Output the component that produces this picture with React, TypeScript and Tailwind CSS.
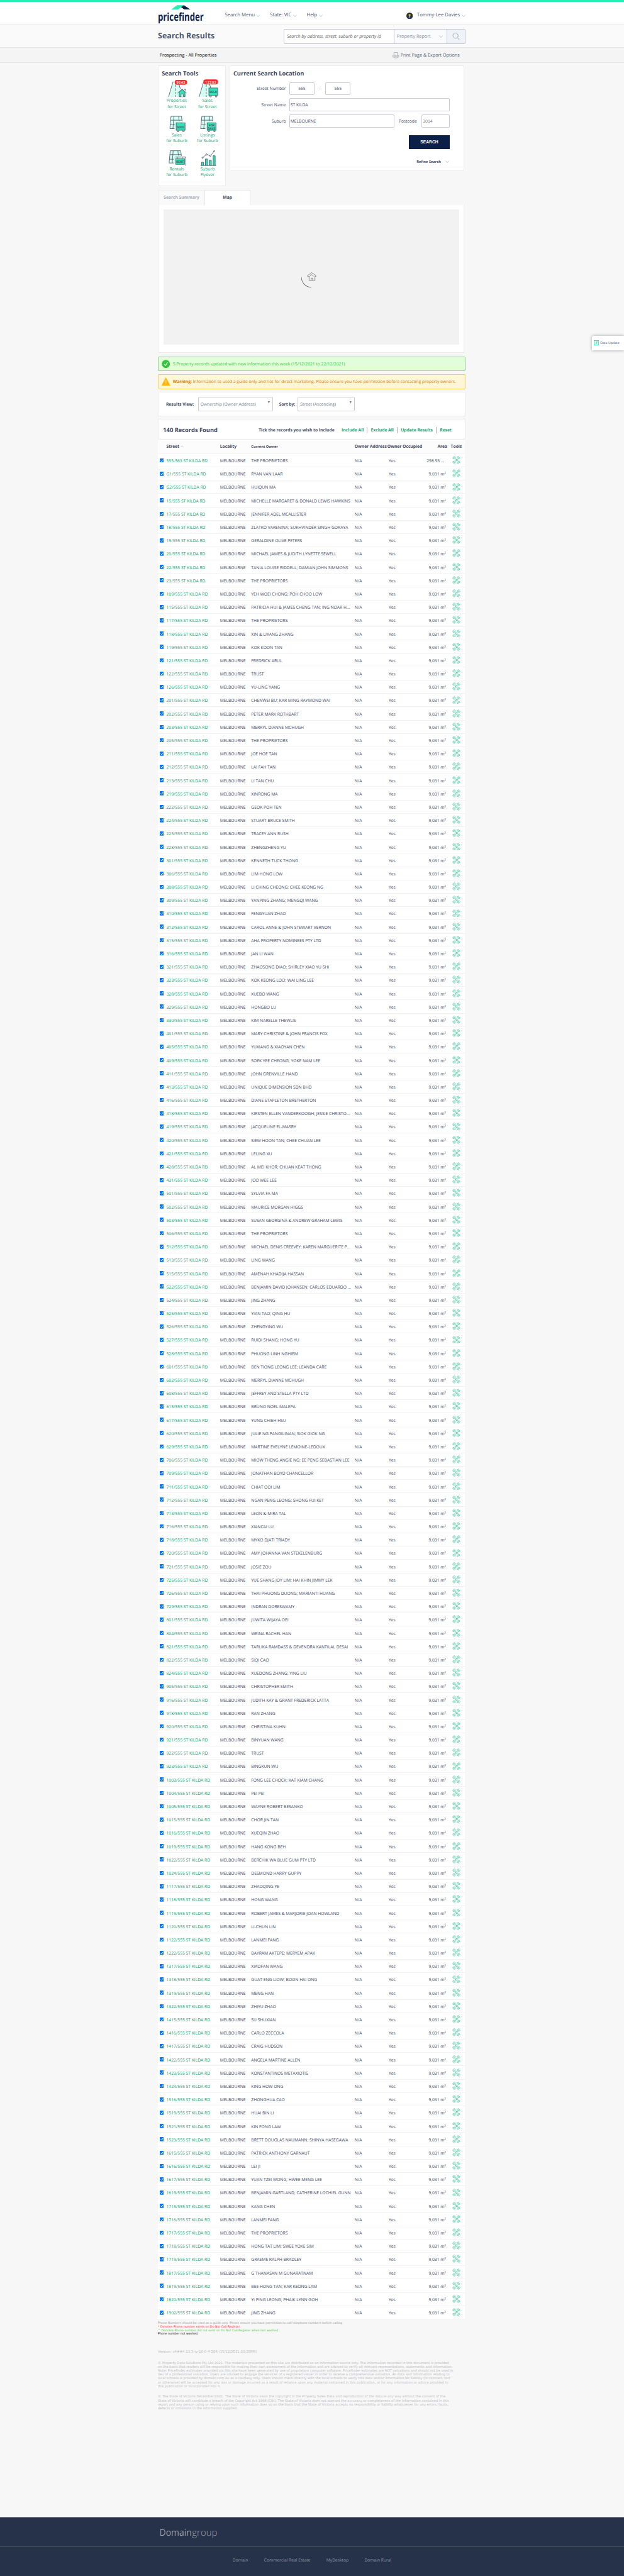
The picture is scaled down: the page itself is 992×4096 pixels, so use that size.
import React from 'react';

const RECORDS = `555-563|THE PROPRIETORS
G1/555|RYAN VAN LAAR
G2/555|HUIQUN MA
15/555|MICHELLE MARGARET & DONALD LEWIS HAWKINS
17/555|JENNIFER ADEL MCALLISTER
18/555|ZLATKO VARENINA; SUKHVINDER SINGH GORAYA
19/555|GERALDINE OLIVE PETERS
20/555|MICHAEL JAMES & JUDITH LYNETTE SEWELL
22/555|TANIA LOUISE RIDDELL; DAMIAN JOHN SIMMONS
23/555|THE PROPRIETORS
109/555|YEH WOEI CHONG; POH CHOO LOW
115/555|PATRICIA HUI & JAMES CHENG TAN; ING NOAR H...
117/555|THE PROPRIETORS
118/555|XIN & LIYANG ZHANG
119/555|KOK KOON TAN
121/555|FREDRICK ARUL
122/555|TRUST
126/555|YU-LING YANG
201/555|CHENWEI BU; KAR MING RAYMOND WAI
202/555|PETER MARK ROTHBART
203/555|MERRYL DIANNE MCHUGH
205/555|THE PROPRIETORS
211/555|JOE HOE TAN
212/555|LAI FAH TAN
213/555|LI TAN CHU
219/555|XINRONG MA
222/555|GEOK POH TEN
224/555|STUART BRUCE SMITH
225/555|TRACEY ANN RUSH
228/555|ZHENGZHENG YU
301/555|KENNETH TUCK THONG
306/555|LIM HONG LOW
308/555|LI CHING CHEONG; CHEE KEONG NG
309/555|YANPING ZHANG; MENGQI WANG
310/555|FENGYUAN ZHAO
312/555|CAROL ANNE & JOHN STEWART VERNON
315/555|AHA PROPERTY NOMINEES PTY LTD
316/555|JAN LI WAN
321/555|ZHAOSONG DIAO; SHIRLEY XIAO YU SHI
323/555|KOK KEONG LOO; WAI LING LEE
328/555|XUEBO WANG
329/555|HONGBO LU
330/555|KIM NARELLE THEWLIS
401/555|MARY CHRISTINE & JOHN FRANCIS FOX
405/555|YUXIANG & XIAOYAN CHEN
409/555|SOEK YEE CHEONG; YOKE NAM LEE
411/555|JOHN GRENVILLE HAND
413/555|UNIQUE DIMENSION SDN BHD
416/555|DIANE STAPLETON BRETHERTON
418/555|KIRSTEN ELLEN VANDERKOOGH; JESSIE CHRISTO...
419/555|JACQUELINE EL-MASRY
420/555|SIEW HOON TAN; CHEE CHUAN LEE
421/555|LELING XU
428/555|AL MEI KHOR; CHUAN KEAT THONG
431/555|JOO WEE LEE
501/555|SYLVIA FA MA
502/555|MAURICE MORGAN HIGGS
503/555|SUSAN GEORGINA & ANDREW GRAHAM LEWIS
506/555|THE PROPRIETORS
512/555|MICHAEL DENIS CREEVEY; KAREN MARGUERITE P...
513/555|LING WANG
515/555|AMENAH KHADIJA HASSAN
522/555|BENJAMIN DAVID JOHANSEN; CARLOS EDUARDO ...
524/555|JING ZHANG
525/555|YIAN TAO; QING HU
526/555|ZHENGYING WU
527/555|RUIDI SHANG; HONG YU
528/555|PHUONG LINH NGHIEM
601/555|BEN TIONG LEONG LEE; LEANDA CARE
602/555|MERRYL DIANNE MCHUGH
608/555|JEFFREY AND STELLA PTY LTD
615/555|BRUNO NOEL MALEPA
617/555|YUNG CHIEH HSU
620/555|JULIE NG PANGILINAN; SIOK GIOK NG
629/555|MARTINE EVELYNE LEMOINE-LEDOUX
706/555|MIOW THENG ANGIE NG; EE PENG SEBASTIAN LEE
709/555|JONATHAN BOYD CHANCELLOR
711/555|CHIAT OOI LIM
712/555|NGAN PENG LEONG; SHONG FUI KET
713/555|LEON & MIRA TAL
716/555|XIANCAI LU
718/555|MYKO DJATI TRIADY
720/555|AMY JOHANNA VAN STEKELENBURG
721/555|JOSIE ZOU
725/555|YUE SHANG JOY LIM; HAI KHIN JIMMY LEK
726/555|THAI PHUONG DUONG; MARIANTI HUANG
729/555|INDRAN DORESWAMY
801/555|JUWITA WIJAYA OEI
804/555|WEINA RACHEL HAN
821/555|TARLIKA RAMDASS & DEVENDRA KANTILAL DESAI
822/555|SIQI CAO
824/555|XUEDONG ZHANG; YING LIU
905/555|CHRISTOPHER SMITH
916/555|JUDITH KAY & GRANT FREDERICK LATTA
918/555|RAN ZHANG
920/555|CHRISTINA KUHN
921/555|BINYUAN WANG
922/555|TRUST
923/555|BINGKUN WU
1003/555|FONG LEE CHOCK; KAT KIAM CHANG
1004/555|PEI PEI
1005/555|WAYNE ROBERT BESANKO
1015/555|CHOR JIN TAN
1016/555|XUEQIN ZHAO
1019/555|HANG KONG BEH
1022/555|BERCHIK WA BLUE GUM PTY LTD
1024/555|DESMOND HARRY GUPPY
1117/555|ZHAOQING YE
1118/555|HONG WANG
1119/555|ROBERT JAMES & MARJORIE JOAN HOWLAND
1120/555|LI-CHUN LIN
1122/555|LANMEI FANG
1222/555|BAYRAM AKTEPE; MERYEM APAK
1317/555|XIAOFAN WANG
1318/555|GUAT ENG LIOW; BOON HAI ONG
1319/555|MENG HAN
1322/555|ZHIYU ZHAO
1415/555|SU SHUXIAN
1416/555|CARLO ZECCOLA
1417/555|CRAIG HUDSON
1422/555|ANGELA MARTINE ALLEN
1423/555|KONSTANTINOS METAXIOTIS
1424/555|KING HOW ONG
1516/555|ZHONGHUA CAO
1519/555|HUAI BIN LI
1521/555|KIN FONG LAW
1523/555|BRETT DOUGLAS NAUMANN; SHINYA HASEGAWA
1615/555|PATRICK ANTHONY GARNAUT
1616/555|LEI JI
1617/555|YUAN TZEI WONG; HWEE MENG LEE
1619/555|BENJAMIN GARTLAND; CATHERINE LOCHIEL GUNN
1715/555|KANG CHEN
1716/555|LANMEI FANG
1717/555|THE PROPRIETORS
1718/555|HONG TAT LIM; SWEE YOKE SIM
1719/555|GRAEME RALPH BRADLEY
1817/555|G THANASAN M GUNARATNAM
1819/555|BEE HONG TAN; KAR KEONG LAM
1820/555|YI PING LEONG; PHAIK LYNN GOH
1902/555|JING ZHANG`
  .split('\n')
  .map((line) => line.split('|'));

const DISCLAIMER = [
  '© Property Data Solutions Pty Ltd 2021. The materials presented on this site are distributed as an information source only. The information recorded in this document is provided',
  'on the basis that readers will be responsible for making their own assessment of the information and are advised to verify all relevant representations, statements and information.',
  'Note: Pricefinder estimates provided via this site have been generated by use of proprietary computer software. Pricefinder estimates are NOT valuations and should not be used in',
  'lieu of a professional valuation. Users are advised to engage the services of a registered valuer in order to receive a comprehensive valuation. All data and information relating to',
  'local schools is provided by domain.com.au as a courtesy only. Users should check directly with the local schools to verify this data and/or information.No liability (in contract, tort',
  'or otherwise) will be accepted for any loss or damage incurred as a result of reliance upon any material contained in this publication, or for any information or advice provided in',
  'this publication or incorporated into it.',
];

const VICTORIA = [
  '© The State of Victoria December/2021. The State of Victoria owns the copyright in the Property Sales Data and reproduction of the data in any way without the consent of the',
  'State of Victoria will constitute a breach of the Copyright Act 1968 (Cth). The State of Victoria does not warrant the accuracy or completeness of the information contained in this',
  'report and any person using or relying upon such information does so on the basis that the State of Victoria accepts no responsibility or liability whatsoever for any errors, faults,',
  'defects or omissions in the information supplied.',
];

function Chevron({ className = '' }: { className?: string }) {
  return (
    <svg viewBox="0 0 12 8" className={`h-8 w-12 shrink-0 ${className}`} fill="none" stroke="#a9b0bd" strokeWidth="1.4">
      <path d="M1 1l5 6 5-6" />
    </svg>
  );
}

function Wrench() {
  return (
    <>
      <path d="M12 6C20 1 29 7 26 17C26 20 27 21 29 23L49 43C51 45 52 46 55 46C65 43 71 52 66 60" />
      <path d="M6 12C1 20 7 29 17 26C20 26 21 27 23 29L43 49C45 51 46 52 46 55C43 65 52 71 60 66" />
      <path d="M12 6L19 13V19H13L6 12M60 66L53 59V53H59L66 60" />
    </>
  );
}

function Wrenches() {
  return (
    <svg viewBox="0 0 72 72" className="h-25 w-25" fill="none" stroke="#52d0a8" strokeWidth="4.5" strokeLinejoin="round">
      <Wrench />
      <g transform="translate(72 0) scale(-1 1)">
        <Wrench />
      </g>
    </svg>
  );
}

function Check() {
  return (
    <svg viewBox="0 0 13 13" className="h-13 w-13">
      <rect width="13" height="13" rx="2" fill="#0075ff" />
      <path d="M2.8 6.8l2.6 2.7 4.8-6" fill="none" stroke="#fff" strokeWidth="1.9" />
    </svg>
  );
}

const INK = '#4d576e';
const MINT = '#d5fff0';
const TEAL = '#2fe3b2';

function Sign({ x, y, children }: { x: number; y: number; children: React.ReactNode }) {
  return (
    <g stroke={INK} strokeWidth="5">
      <path d={`M${x + 10} ${y + 70}v13h12v-13M${x + 62} ${y + 70}v13h12v-13`} fill="#fff" />
      <rect x={x} y={y} width="82" height="69" fill={TEAL} />
      <g stroke="none" fill={INK} fontFamily="Liberation Mono, monospace" fontWeight="700" textAnchor="middle">
        {children}
      </g>
    </g>
  );
}

function MapGrid({ x, y }: { x: number; y: number }) {
  return (
    <g transform={`translate(${x} ${y})`} fill="none" stroke={INK} strokeWidth="5">
      <path d="M13 3h98l8 48-60 66H2z" fill={MINT} stroke="none" />
      <path d="M45 117H2L13 3h97l6 47M40 3L31 117M84 3l4 44M8 39h108M5 82h43" />
    </g>
  );
}

function Road({ x }: { x: number }) {
  return (
    <g transform={`translate(${x} 0)`} fill="none" stroke={INK} strokeWidth="5">
      <path d="M46 54h54l12 60-10 79H3z" fill={MINT} stroke="none" />
      <path d="M44 54L2 194M98 74l13 46M68 80v22M68 115v24M68 150v18M68 178v16" />
    </g>
  );
}

function ToolIcon({ box, children }: { box: string; children: React.ReactNode }) {
  return (
    <svg viewBox={box} className="h-58 w-67">
      {children}
    </svg>
  );
}

function Tool({ label, children }: { label: [string, string]; children: React.ReactNode }) {
  return (
    <a className="flex w-96 flex-col items-center text-center text-[6.72px] leading-18 text-[#12a06c]">
      {children}
      <span>{label[0]}</span>
      <span>{label[1]}</span>
    </a>
  );
}

const badgeText = { fontFamily: 'Open Sans, sans-serif', fontWeight: 600 } as const;

function SearchTools() {
  return (
    <section className="h-371 w-209 rounded-[2px] border border-[#ececec] bg-white pt-12">
      <h2 className="pl-10 text-[9.3px] leading-18 font-bold text-[#3c475f]">Search Tools</h2>
      <div className="mt-9 grid grid-cols-2 gap-y-11 pr-8 pl-8">
        <Tool label={['Properties', 'for Street']}>
          <ToolIcon box="71 25 200 175">
            <Road x={91} />
            <g stroke={INK} strokeWidth="5">
              <path d="M192 150l27-24 27 24v43h-54z" fill={TEAL} />
              <path d="M178 158l41-35 41 35M234 125h19v18" fill="none" />
              <path d="M209 193v-25h20v25" fill="#fff" />
            </g>
            <rect x="150" y="36" width="115" height="46" rx="22" fill="#ff2b2b" />
            <text x="207" y="72" textAnchor="middle" fontSize="33" textLength="82" fill="#fff" {...badgeText}>9243</text>
          </ToolIcon>
        </Tool>
        <Tool label={['Sales', 'for Street']}>
          <ToolIcon box="358 25 200 175">
            <Road x={376} />
            <Sign x={468} y={112}>
              <text x="509" y="161" fontSize="34" textLength="70" lengthAdjust="spacingAndGlyphs">SOLD</text>
            </Sign>
            <rect x="417" y="33" width="136" height="46" rx="22" fill="#ff2b2b" />
            <text x="485" y="69" textAnchor="middle" fontSize="33" textLength="103" fill="#fff" {...badgeText}>12202</text>
          </ToolIcon>
        </Tool>
        <Tool label={['Sales', 'for Suburb']}>
          <ToolIcon box="71 341 200 175">
            <MapGrid x={103} y={367} />
            <Sign x={164} y={430}>
              <text x="205" y="479" fontSize="34" textLength="70" lengthAdjust="spacingAndGlyphs">SOLD</text>
            </Sign>
          </ToolIcon>
        </Tool>
        <Tool label={['Listings', 'for Suburb']}>
          <ToolIcon box="358 341 200 175">
            <MapGrid x={390} y={367} />
            <Sign x={452} y={430}>
              <text x="494" y="463" fontSize="32" textLength="54" lengthAdjust="spacingAndGlyphs">FOR</text>
              <text x="494" y="491" fontSize="32" textLength="70" lengthAdjust="spacingAndGlyphs">SALE</text>
            </Sign>
          </ToolIcon>
        </Tool>
        <Tool label={['Rentals', 'for Suburb']}>
          <ToolIcon box="71 653 200 175">
            <MapGrid x={96} y={683} />
            <g stroke={INK} strokeWidth="5" fill="none">
              <path d="M157 745h96v82M174 745v14M219 745v14" />
              <rect x="159" y="760" width="82" height="52" fill={TEAL} />
            </g>
            <text x="200" y="799" fontSize="34" textLength="70" lengthAdjust="spacingAndGlyphs" textAnchor="middle" fill={INK} fontFamily="Liberation Mono, monospace" fontWeight="700">RENT</text>
          </ToolIcon>
        </Tool>
        <Tool label={['Suburb', 'Flyover']}>
          <ToolIcon box="358 653 200 175">
            <g stroke={INK} strokeWidth="5">
              <path d="M410 750l36-30 36 13 36-42" fill="none" />
              <path d="M400 823v-30h19v30M436 823v-60h19v60M472 823v-49h19v49M508 823v-90h19v90" fill={TEAL} />
              <path d="M391 824h145" fill="none" />
              <circle cx="410" cy="751" r="6" fill={MINT} />
              <circle cx="446" cy="721" r="6" fill={MINT} />
              <circle cx="482" cy="733" r="6" fill={MINT} />
              <circle cx="518" cy="691" r="6" fill={MINT} />
            </g>
          </ToolIcon>
        </Tool>
      </div>
    </section>
  );
}

const field = 'flex h-40 items-center rounded-[2px] border border-[#c9cad9] bg-white text-[6.72px]';

function SearchForm() {
  return (
    <section className="h-325 w-721 rounded-[2px] border border-[#ececec] bg-white pt-12 text-[#3c475f]">
      <h2 className="pl-9 text-[9.3px] leading-18 font-bold">Current Search Location</h2>
      <div className="mt-19 flex h-40 items-center text-[6.72px]">
        <label className="w-171 text-right">Street Number</label>
        <div className={`ml-10 w-78 justify-center pt-1 ${field}`}>555</div>
        <span className="w-33 text-center">-</span>
        <div className={`w-78 justify-center pt-1 ${field}`}>555</div>
      </div>
      <div className="mt-10 flex h-40 items-center text-[6.72px]">
        <label className="w-171 text-right">Street Name</label>
        <div className={`ml-10 w-493 pt-1 pl-2 ${field}`}>ST KILDA</div>
      </div>
      <div className="mt-10 flex h-40 items-center text-[6.72px]">
        <label className="w-171 text-right">Suburb</label>
        <div className={`ml-10 w-323 pt-1 pl-2 ${field}`}>MELBOURNE</div>
        <label className="ml-14 w-70">Postcode</label>
        <div className={`w-86 pt-1 pl-2 text-[#777] ${field}`}>3004</div>
      </div>
      <button className="mt-24 ml-549 block h-41 w-126 bg-[#0b1f47] font-['Liberation_Sans'] text-[6.72px] font-bold text-white">SEARCH</button>
      <div className="mt-31 ml-573 flex h-18 items-center text-[5.68px] font-bold">
        <span>Refine Search</span>
        <Chevron className="ml-14" />
      </div>
    </section>
  );
}

function MapPanel() {
  return (
    <section className="mt-12 w-943">
      <div className="flex h-45 text-[6.72px] font-bold">
        <div className="flex w-143 items-center justify-center rounded-tl-[2px] border-t border-l border-[#eee] bg-[#fafafa] text-[#a3abb8]">Search Summary</div>
        <div className="flex w-142 items-center justify-center border-t border-r border-l border-[#e8e8e8] bg-white text-[#3c475f]">Map</div>
      </div>
      <div className="h-456 border border-t-0 border-[#ececec] bg-white px-15 pt-14">
        <div className="flex h-417 items-center justify-center bg-[#f2f2f2]">
          <svg viewBox="0 0 60 60" className="mt-31 h-60 w-60" fill="none" stroke="#747474" strokeWidth="2">
            <path d="M0 14c0 16 12 32 31 32" />
            <path d="M19 10l13-9 13 9v3l-3-1v13H24V12l-4 2zM26 12l6-5 6 5M30 25v-7h5v7" strokeWidth="1.6" />
          </svg>
        </div>
      </div>
    </section>
  );
}

function Notices() {
  return (
    <>
      <div className="mt-11 flex h-45 w-946 items-center rounded-[2px] border border-[#8ad68e] bg-[#e2fdd9] pl-10 text-[6.72px] text-[#35c43b]">
        <svg viewBox="0 0 26 26" className="mr-8 h-26 w-26">
          <circle cx="13" cy="13" r="12.5" fill="#35c43b" />
          <path d="M8 14l4 4 6-10" fill="none" stroke="#fff" strokeWidth="2" />
        </svg>
        <span className="pt-3">5 Property records updated with new information this week (15/12/2021 to 22/12/2021)</span>
      </div>
      <div className="mt-10 flex h-46 w-946 items-center rounded-[2px] border border-[#f9cf5c] bg-[#fff6d8] pl-10 text-[6.72px] text-[#d07c00]">
        <svg viewBox="0 0 26 26" className="mr-8 h-26 w-26">
          <path d="M13 1L26 25H0z" fill="#ffb400" stroke="#ffb400" strokeLinejoin="round" />
          <path d="M13 8v10M13 20v2" stroke="#fff" strokeWidth="2" />
        </svg>
        <span className="whitespace-nowrap">
          <b>Warning:</b> Information to used a guide only and not for direct marketing. Please ensure you have permission before contacting property owners.
        </span>
      </div>
    </>
  );
}

function Select({ className, value }: { className: string; value: string }) {
  return (
    <div className={`flex h-43 justify-between rounded-[2px] border border-[#cbccdc] bg-white pt-10 pl-6 leading-20 font-normal text-[#727a8a] ${className}`}>
      <span>{value}</span>
      <svg viewBox="0 0 9 9" className="mt-1 mr-7 h-7 w-9">
        <path d="M0 0h9L4.500 9z" fill="#8a8a8a" />
      </svg>
    </div>
  );
}

function Controls() {
  return (
    <section className="mt-8 flex h-75 w-946 items-center rounded-[2px] border border-[#ececec] bg-white pl-23 text-[6.72px] font-bold text-[#3c475f]">
      <span className="w-98 pt-1">Results View:</span>
      <Select className="w-231" value="Ownership (Owner Address)" />
      <span className="ml-19 w-57 pt-1">Sort by:</span>
      <Select className="w-176" value="Street (Ascending)" />
    </section>
  );
}

function Records() {
  const sep = 'mx-10 h-21 w-px bg-[#b0b4bd]';
  return (
    <>
      <section className="mt-9 flex h-63 w-946 items-center rounded-[2px] border border-[#ececec] bg-white pt-5 pl-14 font-bold text-[#3c475f]">
        <h2 className="w-294 text-[9.3px]">140 Records Found</h2>
        <div className="flex items-center text-[6.72px] text-[#0f9d6b]">
          <span className="w-255 text-[#3c475f]">Tick the records you wish to Include</span>
          <a>Include All</a>
          <i className={sep} />
          <a>Exclude All</a>
          <i className={sep} />
          <a>Update Results</a>
          <i className={sep} />
          <a>Reset</a>
        </div>
      </section>
      <div className="mt-2 flex h-42 w-945 items-center border-b border-[#f3f3f3] bg-[#fcfcfc] pl-26 text-[6.72px] font-bold whitespace-nowrap text-[#3c475f]">
        <span className="flex w-165 items-center">
          Street
          <svg viewBox="0 0 12 8" className="ml-4 h-8 w-10" fill="none" stroke="#a9b0bd" strokeWidth="1.4">
            <path d="M1 7l5-6 5 6" />
          </svg>
        </span>
        <span className="w-96">Locality</span>
        <span className="w-318 text-[5.68px]">Current Owner</span>
        <span className="w-101">Owner Address</span>
        <span className="w-154">Owner Occupied</span>
        <span className="w-41">Area</span>
        <span>Tools</span>
      </div>
      {RECORDS.map(([unit, owner], i) => (
        <div
          key={unit}
          className="flex h-[21.1875px] w-945 items-center border-b border-[#f3f3f3] bg-white pt-5 pl-5 text-[6.72px] whitespace-nowrap text-[#3c475f]"
        >
          <span className="-mt-4 w-21">
            <Check />
          </span>
          <a className="w-165 text-[#12a06c]">{unit} ST KILDA RD</a>
          <span className="w-96">MELBOURNE</span>
          <span className="w-318">{owner}</span>
          <span className="w-105">N/A</span>
          <span className="w-100">Yes</span>
          <span className={i === 0 ? 'w-90 pr-19 text-right' : 'w-90 pr-14 text-right'}>{i === 0 ? '298.93 ...' : '9,031 m²'}</span>
          <span className="-mt-6 ml-5">
            <Wrenches />
          </span>
        </div>
      ))}
    </>
  );
}

export default function App() {
  return (
    <div className="relative flex h-[4096px] w-full flex-col overflow-hidden bg-[#f7f7f7] font-['Open_Sans',sans-serif] [--spacing:0.51675px] [text-rendering:geometricPrecision]">
      <div className="h-5 bg-[#22f0b3]" />
      <header className="h-70 border-b border-[#ececec] bg-white">
        <div className="mx-auto flex h-full w-948">
          <svg viewBox="0 0 142 70" className="h-70 w-142 overflow-visible">
            <path d="M41 23L59 10h21L62 23z" fill="#22f0b3" />
            <path d="M71 16l9-6 20 13H81z" fill="#0b1f47" />
            <text x="0" y="59" fontSize="34" fontFamily="Open Sans, sans-serif" fontWeight="700" fill="#0b1f47" textLength="141" lengthAdjust="spacingAndGlyphs">pricefinder</text>
          </svg>
          <nav className="flex flex-1 items-center pt-18 pl-64 text-[7.75px] text-[#4d576e]">
            <span>Search Menu</span>
            <Chevron className="ml-5" />
            <span className="ml-30">State: VIC</span>
            <Chevron className="ml-5" />
            <span className="ml-30">Help</span>
            <Chevron className="ml-5" />
            <svg viewBox="0 0 20 20" className="ml-auto h-20 w-20">
              <defs>
                <clipPath id="face">
                  <circle cx="10" cy="10" r="10" />
                </clipPath>
              </defs>
              <g clipPath="url(#face)">
                <rect width="20" height="20" fill="#26361f" />
                <path d="M2 20c0-6 4-8 8-8s8 2 8 8z" fill="#2c3f6b" />
                <ellipse cx="10" cy="7.5" rx="3.2" ry="4.3" fill="#d9a989" />
                <path d="M6.5 6c0-5 7-5 7 0-2-2-5-2-7 0z" fill="#1e1712" />
                <path d="M8.5 12h3L10 17z" fill="#fff" />
              </g>
            </svg>
            <span className="ml-13">Tommy-Lee Davies</span>
            <Chevron className="mr-2 ml-5" />
          </nav>
        </div>
      </header>
      <div className="h-72 border-b border-[#e8e8e8] bg-[#fafafa]">
        <div className="mx-auto flex h-full w-948 items-center justify-between">
          <h1 className="mt-2 text-[12.4px] font-bold text-[#4d576e]">Search Results</h1>
          <div className="mt-5 mr-2 flex h-46 w-560 rounded-[2px] border border-[#c3c5d6] bg-white text-[7.23px]">
            <span className="flex w-337 items-center pt-2 pl-9 text-[7.13px] text-[#666] italic">Search by address, street, suburb or property id</span>
            <span className="flex w-163 items-center border-l border-[#c3c5d6] bg-[#fafbfd] pl-8 text-[#858c9b]">
              Property Report
              <Chevron className="ml-25" />
            </span>
            <span className="flex flex-1 items-center justify-center border-l border-[#c3c5d6] bg-[#eff3f8]">
              <svg viewBox="0 0 24 24" className="h-24 w-24" fill="none" stroke="#7d8595" strokeWidth="1.3">
                <circle cx="10" cy="9" r="8" />
                <path d="M15.500 15.500l7 7" />
              </svg>
            </span>
          </div>
        </div>
      </div>
      <div className="h-46 border-b border-[#e8e8e8] bg-[#f4f4f4]">
        <div className="mx-auto flex h-full w-948 items-center justify-between pt-3 pr-20 pl-5 text-[7.23px]">
          <span className="text-black">Prospecting - All Properties</span>
          <span className="flex items-center text-[#4d576e]">
            <svg viewBox="0 0 20 18" className="mr-4 h-18 w-20" fill="none" stroke="#9299a6" strokeWidth="1.3">
              <path d="M4.500 10V1h11v9M4.500 15H1v-5h18v5h-3.500M4.500 13h11v4.300h-11z" />
            </svg>
            Print Page &amp; Export Options
          </span>
        </div>
      </div>
      <main className="mx-auto w-948 flex-1 pt-9">
        <div className="flex gap-12">
          <SearchTools />
          <SearchForm />
        </div>
        <MapPanel />
        <Notices />
        <Controls />
        <Records />
        <div className="mt-8 font-['DejaVu_Sans',sans-serif] text-[4.69px] leading-11 whitespace-nowrap">
          <p className="text-[#999]">Phone Numbers should be used as a guide only. Please ensure you have permission to call telephone numbers before calling</p>
          <p className="text-[#f22]">* Denotes Phone number exists on Do Not Call Register.</p>
          <p className="text-[#5bbf4f]">^ Denotes Phone number did not exist on Do Not Call Register when last washed.</p>
          <p className="text-black">Phone number not washed.</p>
        </div>
        <div className="mt-43 font-['DejaVu_Sans',sans-serif] text-[5.2px] leading-12 whitespace-nowrap text-[#bbbcbf]">
          <p className="text-[5.4px]">Version: v4##4.13.3-ip-10-0-4-204 (15/12/2021 03:20PM)</p>
          <div className="mt-22">
            {DISCLAIMER.map((line) => (
              <p key={line}>{line}</p>
            ))}
          </div>
          <div className="mt-20">
            {VICTORIA.map((line) => (
              <p key={line}>{line}</p>
            ))}
          </div>
        </div>
      </main>
      <footer className="h-182 border-t border-[#8e949f] bg-[#263249]">
        <div className="mx-auto h-89 w-948">
          <svg viewBox="0 0 190 89" className="h-89 w-190">
            <text x="5" y="57" fontSize="29" fontFamily="Open Sans, sans-serif" fill="#9a9fa9" textLength="99" lengthAdjust="spacingAndGlyphs">Domain</text>
            <text x="105" y="57" fontSize="29" fontFamily="Open Sans, sans-serif" fontWeight="300" fill="#9a9fa9" textLength="78" lengthAdjust="spacingAndGlyphs">group</text>
          </svg>
        </div>
        <div className="flex h-91 justify-center gap-49 border-t border-[#4b5663] pt-31 text-[6.72px] leading-18 text-[#9097a3]">
          <a>Domain</a>
          <a>Commercial Real Estate</a>
          <a>MyDesktop</a>
          <a>Domain Rural</a>
        </div>
      </footer>
      <div className="absolute top-[534px] right-0 flex h-45 w-98 items-start rounded-tl-[3px] bg-white pt-14 pl-5 text-[5.17px] text-[#4d576e] shadow-[0_0_5px_rgba(0,0,0,0.35)]">
        <svg viewBox="0 0 16 16" className="mr-4 h-16 w-16">
          <rect x="1" y="1" width="14" height="14" fill="#e9fff8" stroke="#22d8a5" strokeWidth="1.600" />
          <text x="8" y="12.500" textAnchor="middle" fontSize="12" fontWeight="700" fill="#22d8a5">?</text>
        </svg>
        <span className="mt-1">Data Update</span>
      </div>
    </div>
  );
}
